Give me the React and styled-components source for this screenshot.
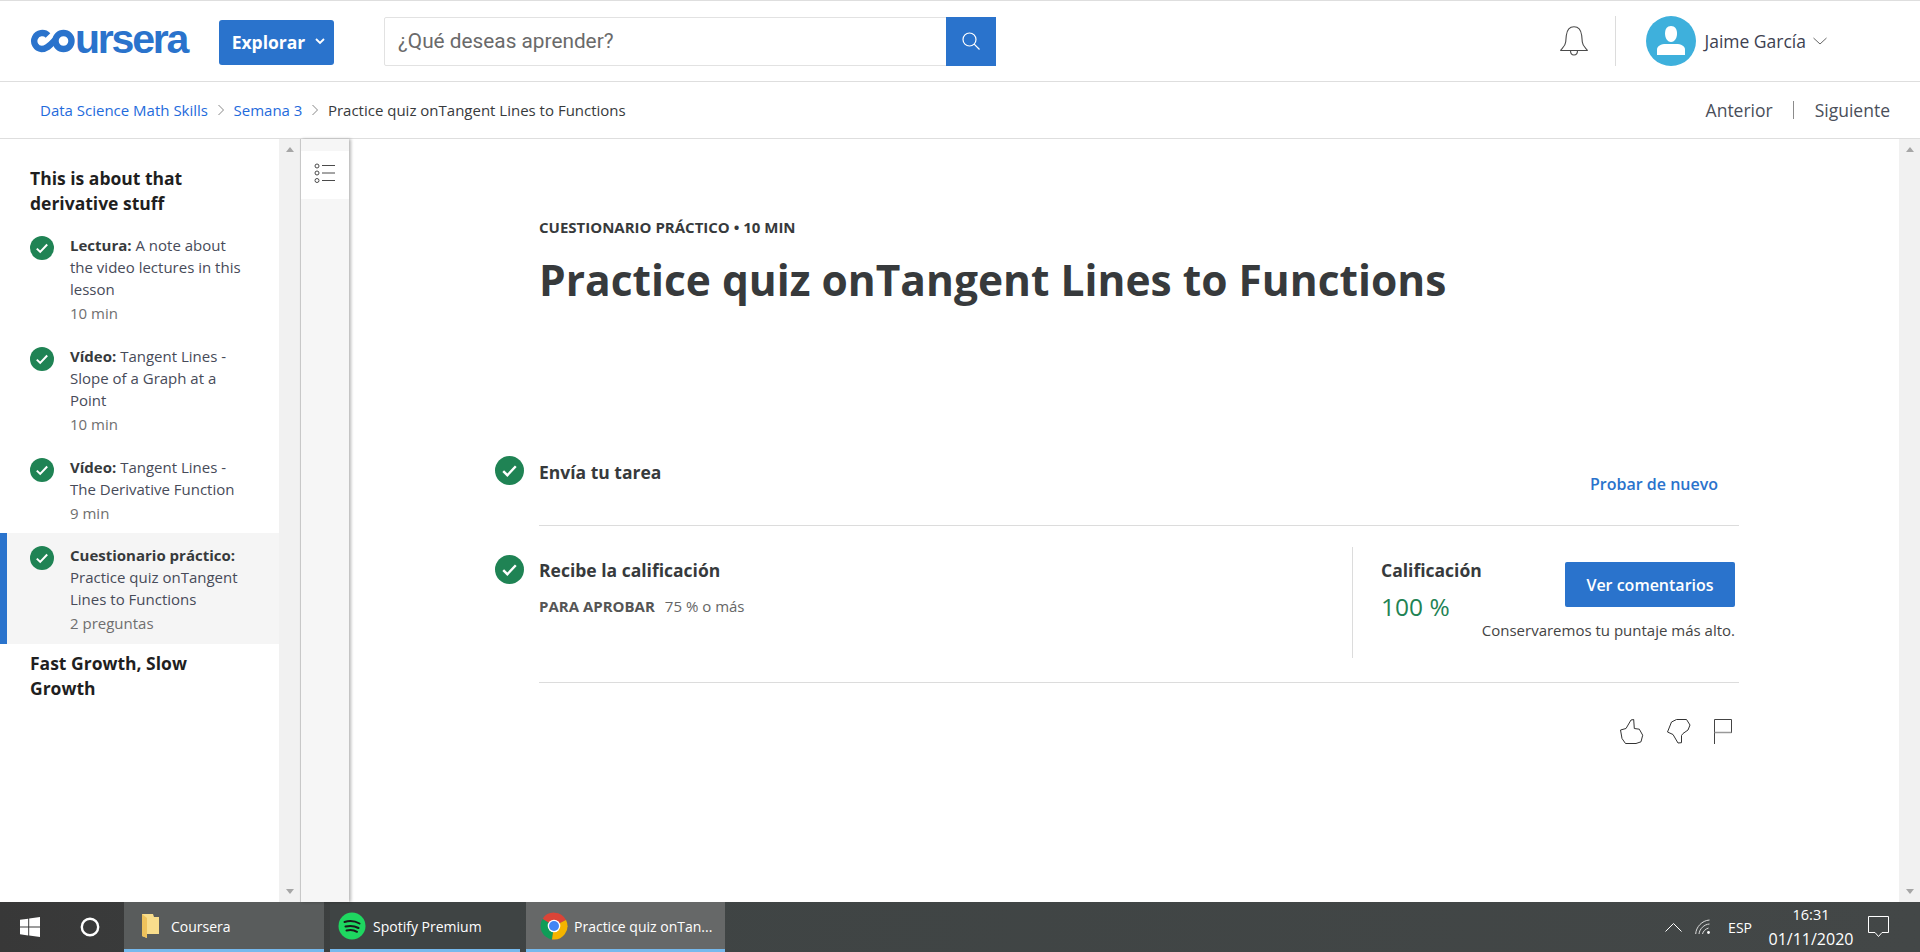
import React from "react";
import styled, { createGlobalStyle } from "styled-components";

const Global = createGlobalStyle`
  html, body { margin: 0; padding: 0; height: 952px; overflow: hidden; background: #fff; }
  body { font-family: "Open Sans", sans-serif; color: #373a3c; }
  * { box-sizing: border-box; }
`;
const Page = styled.div`display: flex; flex-direction: column; width: 1920px; height: 952px;`;

const Header = styled.header`
  display: flex; align-items: center; height: 82px; padding-left: 30px;
  border-top: 1px solid #dedede; border-bottom: 1px solid #dedede; flex: none;
`;
const Logo = styled.div`
  display: flex; align-items: center; width: 159px; margin-right: 30px; height: 30px;
  color: #2a73cc; font: 700 41px/30px "Liberation Sans", sans-serif; letter-spacing: -2.2px;
`;
const LogoWord = styled.span`position: relative; top: -2px;`;
const ExploreButton = styled.button`
  display: flex; align-items: center; justify-content: center; gap: 10px;
  width: 115px; height: 45px; margin-right: 50px; margin-top: 3px; padding: 0 0 2px 4px; border: 0; border-radius: 3px;
  background: #2a73cc; color: #fff; font: 700 17.5px "Open Sans", sans-serif;
`;
const Search = styled.div`
  display: flex; width: 612px; height: 49px;
  border: 1px solid #e2e2e2; border-radius: 2px 0 0 2px;
`;
const SearchText = styled.div`
  flex: 1; padding-left: 13px; font: 400 20.8px/47px Roboto, sans-serif; color: #6a6a6a;
`;
const SearchButton = styled.div`
  display: flex; align-items: center; justify-content: center;
  width: 50px; height: 49px; margin: -1px -1px -1px 0; background: #2a73cc;
`;
const HeaderRight = styled.div`display: flex; align-items: center; margin-left: auto; height: 50px;`;
const BellBox = styled.div`display: flex; margin-right: 27px;`;
const VRule = styled.div`width: 1px; height: 50px; background: #dcdcdc; margin-right: 30px;`;
const Avatar = styled.div`display: flex; margin-right: 8px;`;
const UserName = styled.span`font-size: 17.5px; color: #3d4150; margin-right: 7px;`;
const UserChevron = styled.div`display: flex; margin-right: 93px;`;

const Crumbs = styled.nav`
  display: flex; align-items: center; height: 57px; padding: 0 30px 0 40px; flex: none;
  border-bottom: 1px solid #dedede; font-size: 15px; line-height: 20px;
`;
const CrumbLink = styled.a`color: #1f6bdc;`;
const CrumbText = styled.span`color: #373a3c;`;
const CrumbSep = styled.span`display: flex; margin: 0 8.500px 0 9px;`;
const Pager = styled.div`display: flex; align-items: center; margin-left: auto; font-size: 17.5px; color: #4a4f5a;`;
const PagerRule = styled.span`width: 1px; height: 18px; background: #8b8b8b; margin: 0 21px 0 20px;`;

const Body = styled.div`display: flex; flex: 1; min-height: 0;`;
const Sidebar = styled.aside`width: 279px; flex: none; padding-top: 27px; background: #fff;`;
const SectionTitle = styled.h3`
  margin: ${p => p.$top}px 50px 0 30px; font-size: 17.5px; line-height: 25px; font-weight: 700; color: #1f1f1f;
`;
const Items = styled.div`margin-top: 7px;`;
const Item = styled.div`
  display: flex; gap: 16px; padding: 11px 34px ${p => p.$pb}px ${p => p.$active ? 23 : 30}px;
  border-left: ${p => p.$active ? "7px solid #2a73cc" : "0"};
  background: ${p => p.$active ? "#f5f5f5" : "transparent"};
`;
const SmallCheck = styled.div`flex: none; display: flex; width: 24px; margin-top: 2px; height: 24px;`;
const ItemText = styled.div`font-size: 15px; line-height: 22px; color: #474b59;`;
const Strong = styled.b`font-weight: 700; color: #373a3c;`;
const Meta = styled.div`margin-top: 2px; color: #6f6f6f;`;

const Scrollbar = styled.div`
  display: flex; flex-direction: column; justify-content: space-between; align-items: center; flex: none;
  width: ${p => p.$w}px; padding: 8px 0; background: #f1f1f1;
`;
const ArrowUp = styled.i`width: 0; height: 0; border: 4.5px solid transparent; border-top: 0; border-bottom: 5px solid #a6a6a6;`;
const ArrowDown = styled.i`width: 0; height: 0; border: 4.5px solid transparent; border-bottom: 0; border-top: 5px solid #a6a6a6;`;

const TabRail = styled.div`
  width: 49px; flex: none; padding-top: 12px; background: #f6f6f6; border-left: 1px solid #c8c8c8;
  box-shadow: 2px 0 3px rgba(0,0,0,.28); position: relative;
`;
const TabTile = styled.div`display: flex; align-items: center; justify-content: center; height: 48px; padding-bottom: 5px; background: #fff;`;

const Main = styled.main`flex: 1; min-width: 0; padding: 78px 0 0 146px;`;
const Head = styled.div`margin-left: 44px;`;
const Eyebrow = styled.div`font-size: 15px; line-height: 20px; font-weight: 700; color: #373a3c;`;
const Title = styled.h1`margin: 17px 0 0; font-size: 42.5px; line-height: 52px; font-weight: 700; color: #373a3c;`;
const Step = styled.section`display: flex; width: 1244px; margin-top: ${p => p.$top}px;`;
const BigCheck = styled.div`flex: none; display: flex; width: 44px; height: 29px; margin-top: ${p => p.$top}px;`;
const StepBody = styled.div`
  flex: 1; display: flex; justify-content: space-between; height: ${p => p.$h}px;
  border-bottom: 1px solid #dcdcdc;
`;
const StepLeft = styled.div`padding-top: ${p => p.$top}px;`;
const StepTitle = styled.div`font-size: 17.5px; line-height: 24px; font-weight: 700; color: #373a3c;`;
const TextLink = styled.a`margin: 18px 21px 0 0; font-size: 16px; line-height: 20px; font-weight: 600; color: #2a73cc;`;
const Requirement = styled.div`display: flex; gap: 10px; margin-top: 14px; font-size: 15px; line-height: 20px; color: #666;`;
const ReqLabel = styled.b`color: #555; font-weight: 700;`;
const GradePanel = styled.div`
  display: flex; justify-content: space-between; width: 387px; height: 111px; margin-top: 21px;
  padding: 11px 4px 0 28px; border-left: 1px solid #dcdcdc;
`;
const GradeValue = styled.div`margin-top: 9px; font-size: 24.500px; line-height: 32px; color: #1f8354;`;
const GradeAction = styled.div`display: flex; flex-direction: column; align-items: flex-end; padding-top: 4px;`;
const PrimaryButton = styled.button`
  width: 170px; height: 45px; border: 0; border-radius: 2px; background: #2a73cc; color: #fff;
  font: 600 16px "Open Sans", sans-serif;
`;
const Note = styled.div`margin-top: 13px; font-size: 15px; line-height: 20px; color: #444; white-space: nowrap;`;
const Feedback = styled.div`display: flex; justify-content: flex-end; gap: 23px; width: 1193px; margin: 36px 0 0 44px;`;

const Taskbar = styled.footer`
  display: flex; height: 50px; flex: none; color: #fff; font: 400 14px "Open Sans", sans-serif;
  background: linear-gradient(90deg, #383838, #3f4444 30%, #434747);
`;
const StartIcons = styled.div`display: flex; align-items: center; width: 124px; padding-left: 20px; gap: 40px;`;
const TaskButton = styled.div`
  display: flex; align-items: center; gap: ${p => p.$gap}px; width: ${p => p.$w}px; margin-right: ${p => p.$mr}px;
  padding: 1px 0 0 ${p => p.$pad}px; background: ${p => p.$bg}; border-bottom: 3px solid #76b9ed;
`;
const Tray = styled.div`display: flex; align-items: center; margin-left: auto; padding-right: 31px;`;
const TrayChevron = styled.div`display: flex; margin-right: 13px;`;
const TrayWifi = styled.div`display: flex; margin-right: 17px;`;
const Lang = styled.span`font-size: 14px; margin-right: 16px;`;
const Clock = styled.div`display: flex; flex-direction: column; align-items: center; line-height: 24px; margin-right: 14px; width: 86px;`;
const ClockLine = styled.span`font-size: ${p => p.$size}px;`;

const Check = ({ size }) => (
  <svg width={size} height={size} viewBox="0 0 24 24">
    <circle cx="12" cy="12" r="12" fill="#1f8354" />
    <path d="M6.8 12.6l3.4 3.3 7-7.4" fill="none" stroke="#fff" strokeWidth="2" />
  </svg>
);
const Chevron = ({ w = 8, h = 12, c = "#888" }) => (
  <svg width={w} height={h} viewBox="0 0 8 12"><path d="M1.5 1l5 5-5 5" fill="none" stroke={c} /></svg>
);

export default function App() {
  return (
    <Page>
      <Global />
      <Header>
        <Logo>
          <svg width="45" height="24" viewBox="0 0 45 24" style={{ flex: "none" }} fill="none" stroke="#2a73cc" strokeWidth="6.4">
            <circle cx="33.500" cy="12" r="8" />
            <path d="M18 6.500A8 8 0 1 0 11.500 20C18 20 21 15 26 10" />
          </svg>
          <LogoWord>ursera</LogoWord>
        </Logo>
        <ExploreButton>
          Explorar
          <svg width="10" height="7" viewBox="0 0 10 7"><path d="M1 1l4 4 4-4" fill="none" stroke="#fff" strokeWidth="1.8" /></svg>
        </ExploreButton>
        <Search>
          <SearchText>¿Qué deseas aprender?</SearchText>
          <SearchButton>
            <svg width="22" height="22" viewBox="0 0 22 22" fill="none" stroke="#fff" strokeWidth="1.2">
              <circle cx="9.5" cy="9.5" r="6.5" /><path d="M14.2 14.2l5.3 5.3" />
            </svg>
          </SearchButton>
        </Search>
        <HeaderRight>
          <BellBox>
            <svg width="28" height="30" viewBox="0 0 28 30" fill="none" stroke="#4a4a4a" strokeWidth="1.1">
              <path d="M.7 24.5c0-1.5 4.6-3.5 5-8.5l.6-6.5C7 4 10 .8 14 .8s7 3.2 7.7 8.7l.6 6.5c.4 5 5 7 5 8.5z" />
              <path d="M10.5 24.5c0 3 1.6 4.5 3.5 4.5s3.5-1.5 3.5-4.5" />
            </svg>
          </BellBox>
          <VRule />
          <Avatar>
            <svg width="50" height="50" viewBox="0 0 50 50">
              <circle cx="25" cy="25" r="25" fill="#3eb0dc" />
              <path d="M25 10c4 0 6 3 6 7.500 0 4-2 8.500-6 8.500s-6-4.500-6-8.500C19 13 21 10 25 10z" fill="#fff" />
              <path d="M11 39v-5.500C11 30 15 28 20 28h10c5 0 9 2 9 5.500V39z" fill="#fff" />
            </svg>
          </Avatar>
          <UserName>Jaime García</UserName>
          <UserChevron>
            <svg width="14" height="8" viewBox="0 0 14 8"><path d="M.5 1L7 7l6.500-6" fill="none" stroke="#666" /></svg>
          </UserChevron>
        </HeaderRight>
      </Header>

      <Crumbs>
        <CrumbLink>Data Science Math Skills</CrumbLink>
        <CrumbSep><Chevron /></CrumbSep>
        <CrumbLink>Semana 3</CrumbLink>
        <CrumbSep><Chevron /></CrumbSep>
        <CrumbText>Practice quiz onTangent Lines to Functions</CrumbText>
        <Pager>Anterior<PagerRule />Siguiente</Pager>
      </Crumbs>

      <Body>
        <Sidebar>
          <SectionTitle $top={0}>This is about that derivative stuff</SectionTitle>
          <Items>
            <Item $pb={10}>
              <SmallCheck><Check size={24} /></SmallCheck>
              <ItemText><Strong>Lectura:</Strong> A note about the video lectures in this lesson<Meta>10 min</Meta></ItemText>
            </Item>
            <Item $pb={10}>
              <SmallCheck><Check size={24} /></SmallCheck>
              <ItemText><Strong>Vídeo:</Strong> Tangent Lines - Slope of a Graph at a Point<Meta>10 min</Meta></ItemText>
            </Item>
            <Item $pb={9}>
              <SmallCheck><Check size={24} /></SmallCheck>
              <ItemText><Strong>Vídeo:</Strong> Tangent Lines - The Derivative Function<Meta>9 min</Meta></ItemText>
            </Item>
            <Item $active $pb={10}>
              <SmallCheck><Check size={24} /></SmallCheck>
              <ItemText><Strong>Cuestionario práctico:</Strong> Practice quiz onTangent Lines to Functions<Meta>2 preguntas</Meta></ItemText>
            </Item>
          </Items>
          <SectionTitle $top={7}>Fast Growth, Slow Growth</SectionTitle>
        </Sidebar>
        <Scrollbar $w={21}><ArrowUp /><ArrowDown /></Scrollbar>
        <TabRail>
          <TabTile>
            <svg width="22" height="20" viewBox="0 0 22 20" fill="none" stroke="#4a4a4a">
              <circle cx="3" cy="3" r="2" /><circle cx="3" cy="10" r="2" /><circle cx="3" cy="17.500" r="2" />
              <path d="M8 2.500h13M8 10h13M8 17.500h13" />
            </svg>
          </TabTile>
        </TabRail>
        <Main>
          <Head>
            <Eyebrow>CUESTIONARIO PRÁCTICO • 10 MIN</Eyebrow>
            <Title>Practice quiz onTangent Lines to Functions</Title>
          </Head>
          <Step $top={150}>
            <BigCheck $top={0}><Check size={29} /></BigCheck>
            <StepBody $h={70}>
              <StepLeft $top={4}><StepTitle>Envía tu tarea</StepTitle></StepLeft>
              <TextLink>Probar de nuevo</TextLink>
            </StepBody>
          </Step>
          <Step $top={0}>
            <BigCheck $top={29}><Check size={29} /></BigCheck>
            <StepBody $h={157}>
              <StepLeft $top={32}>
                <StepTitle>Recibe la calificación</StepTitle>
                <Requirement><ReqLabel>PARA APROBAR</ReqLabel>75 % o más</Requirement>
              </StepLeft>
              <GradePanel>
                <div>
                  <StepTitle>Calificación</StepTitle>
                  <GradeValue>100 %</GradeValue>
                </div>
                <GradeAction>
                  <PrimaryButton>Ver comentarios</PrimaryButton>
                  <Note>Conservaremos tu puntaje más alto.</Note>
                </GradeAction>
              </GradePanel>
            </StepBody>
          </Step>
          <Feedback>
            <svg width="24" height="25" viewBox="0 0 24 25" fill="none" stroke="#333">
              <path d="M.5 11L6 9.500 11 1l2.700-.5.600 9 5 .7 3.400 6-1.700 6.600-5 1.700H5.500L2 19.500z" />
            </svg>
            <svg width="24" height="25" viewBox="0 0 24 25" fill="none" stroke="#333">
              <path d="M.5 13L4.500 3 9.500.5h10L23 6l-2 5-5 3.500-1.500 2v7.200L11 24 6 15.500z" />
            </svg>
            <svg width="18" height="25" viewBox="0 0 18 25" fill="none">
              <path d="M.5 25V.5h17v13.500" stroke="#444" /><path d="M.5 13.500h17" stroke="#999" strokeWidth="1.500" />
            </svg>
          </Feedback>
        </Main>
        <Scrollbar $w={21}><ArrowUp /><ArrowDown /></Scrollbar>
      </Body>

      <Taskbar>
        <StartIcons>
          <svg width="20" height="20" viewBox="0 0 20 20" fill="#fff" style={{ flex: "none" }}>
            <path d="M0 2.800l8.200-1.100v7.900H0zM9.200 1.500L20 0v9.600H9.200zM0 10.500h8.200v7.900L0 17.200zM9.200 10.500H20V20L9.200 18.500z" />
          </svg>
          <svg width="20" height="20" viewBox="0 0 20 20" style={{ flex: "none" }}><circle cx="10" cy="10" r="8.200" fill="none" stroke="#fff" strokeWidth="2.400" /></svg>
        </StartIcons>
        <TaskButton $w={200} $mr={6} $pad={18} $gap={12} $bg="#595c5c">
          <svg width="17" height="26" viewBox="0 0 17 26">
            <path d="M0 1h11l1 3h5v17H5v4l-5-2z" fill="#f8dd8c" /><path d="M0 1l5 4v20l-5-2z" fill="#eec25c" />
          </svg>
          Coursera
        </TaskButton>
        <TaskButton $w={190} $mr={6} $pad={8} $gap={7} $bg="#3f4444">
          <svg width="28" height="28" viewBox="0 0 28 28">
            <circle cx="14" cy="14" r="13.500" fill="#1ed760" />
            <path d="M6.500 10C11 8.700 17 9 21.500 11.500M7.500 14.500c4-1 9-.7 13 1.500M8.500 18.500c3.500-.8 7.500-.5 10.500 1.300" fill="none" stroke="#1a1a1a" strokeWidth="2" strokeLinecap="round" />
          </svg>
          Spotify Premium
        </TaskButton>
        <TaskButton $w={199} $mr={0} $pad={14} $gap={6} $bg="#666868">
          <svg width="28" height="28" viewBox="0 0 28 28">
            <path d="M14 14L2.500 7A13.500 13.500 0 0 1 26 8z" fill="#db4437" />
            <path d="M14 14L2.500 7A13.500 13.500 0 0 0 12 27.400z" fill="#0f9d58" />
            <path d="M14 14L26 8A13.500 13.500 0 0 1 12 27.400z" fill="#f4b400" />
            <circle cx="14" cy="14" r="6.300" fill="#fff" /><circle cx="14" cy="14" r="5" fill="#4285f4" />
          </svg>
          Practice quiz onTan...
        </TaskButton>
        <Tray>
          <TrayChevron>
            <svg width="17" height="10" viewBox="0 0 17 10"><path d="M.5 9.500L8.500 1.500l8 8" fill="none" stroke="#fff" /></svg>
          </TrayChevron>
          <TrayWifi>
            <svg width="16" height="16" viewBox="0 0 16 16" fill="none" stroke="#ddd">
              <path d="M.7 15C1 8 7 1.500 14.500 1M4 15c.5-5 5-9.700 10.500-10M7.500 15c.5-2.700 3-5 6-6" />
              <circle cx="13.500" cy="13.500" r="1.400" fill="#fff" stroke="none" />
            </svg>
          </TrayWifi>
          <Lang>ESP</Lang>
          <Clock><ClockLine $size={14.5}>16:31</ClockLine><ClockLine $size={16}>01/11/2020</ClockLine></Clock>
          <svg width="21" height="22" viewBox="0 0 21 22"><path d="M.5.500h20v16h-6.500l-3.500 4-3.500-4H.5z" fill="none" stroke="#fff" /></svg>
        </Tray>
      </Taskbar>
    </Page>
  );
}
